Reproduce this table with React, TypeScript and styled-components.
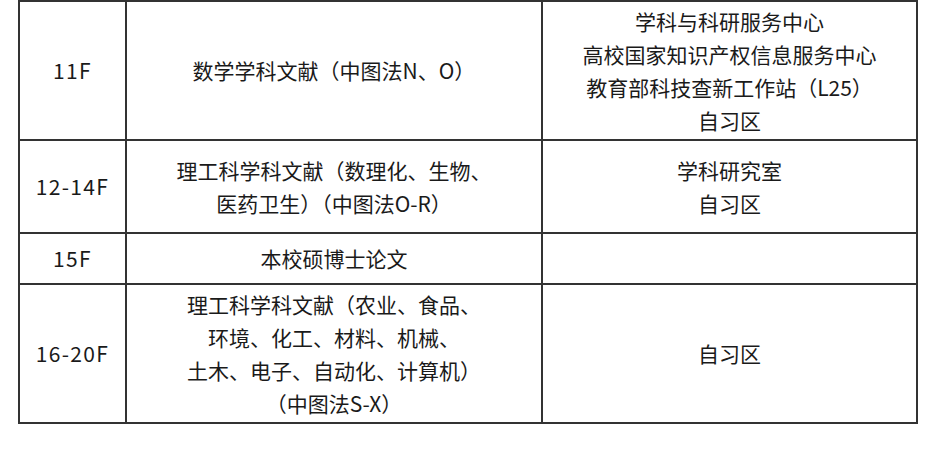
import React from 'react';
import styled, { createGlobalStyle } from 'styled-components';

interface FloorRow {
  floor: string;
  collection: string[];
  services: string[];
  height: number;
}

const rows: FloorRow[] = [
  {
    floor: '11F',
    collection: ['数学学科文献（中图法N、O）'],
    services: ['学科与科研服务中心', '高校国家知识产权信息服务中心', '教育部科技查新工作站（L25）', '自习区'],
    height: 139,
  },
  {
    floor: '12-14F',
    collection: ['理工科学科文献（数理化、生物、', '医药卫生）（中图法O-R）'],
    services: ['学科研究室', '自习区'],
    height: 93,
  },
  {
    floor: '15F',
    collection: ['本校硕博士论文'],
    services: [],
    height: 51,
  },
  {
    floor: '16-20F',
    collection: ['理工科学科文献（农业、食品、', '环境、化工、材料、机械、', '土木、电子、自动化、计算机）', '（中图法S-X）'],
    services: ['自习区'],
    height: 139,
  },
];

function App(): JSX.Element {
  return (
    <>
      <GlobalStyle />
      <Page>
        <Table>
          {rows.map((row) => (
            <Row key={row.floor} $height={row.height}>
              <Cell $spaced>{row.floor}</Cell>
              <Cell>
                {row.collection.map((line) => (
                  <Line key={line}>{line}</Line>
                ))}
              </Cell>
              <Cell>
                {row.services.map((line) => (
                  <Line key={line}>{line}</Line>
                ))}
              </Cell>
            </Row>
          ))}
        </Table>
      </Page>
    </>
  );
}

const GlobalStyle = createGlobalStyle`
  html, body {
    margin: 0;
    padding: 0;
    background: #ffffff;
  }
  body {
    font-family: "Noto Sans CJK SC", "Noto Sans", sans-serif;
    color: #1a1a1a;
  }
`;

const Page = styled.div`
  width: 941px;
  height: 450px;
  padding-left: 18px;
  box-sizing: border-box;
`;

const Table = styled.div`
  width: 900px;
  box-sizing: border-box;
  border-top: 2px solid #333333;
  border-left: 2px solid #333333;
  display: flex;
  flex-direction: column;
`;

const Row = styled.div<{ $height: number }>`
  display: grid;
  grid-template-columns: 107px 416px 375px;
  height: ${({ $height }) => $height}px;
`;

const Cell = styled.div<{ $spaced?: boolean }>`
  box-sizing: border-box;
  border-right: 2px solid #333333;
  border-bottom: 2px solid #333333;
  display: flex;
  flex-direction: column;
  align-items: center;
  justify-content: center;
  text-align: center;
  font-size: 21px;
  line-height: 33px;
  letter-spacing: ${({ $spaced }) => ($spaced ? '1.3px' : '0')};
`;

const Line = styled.div`
  white-space: nowrap;
`;

export default App;
